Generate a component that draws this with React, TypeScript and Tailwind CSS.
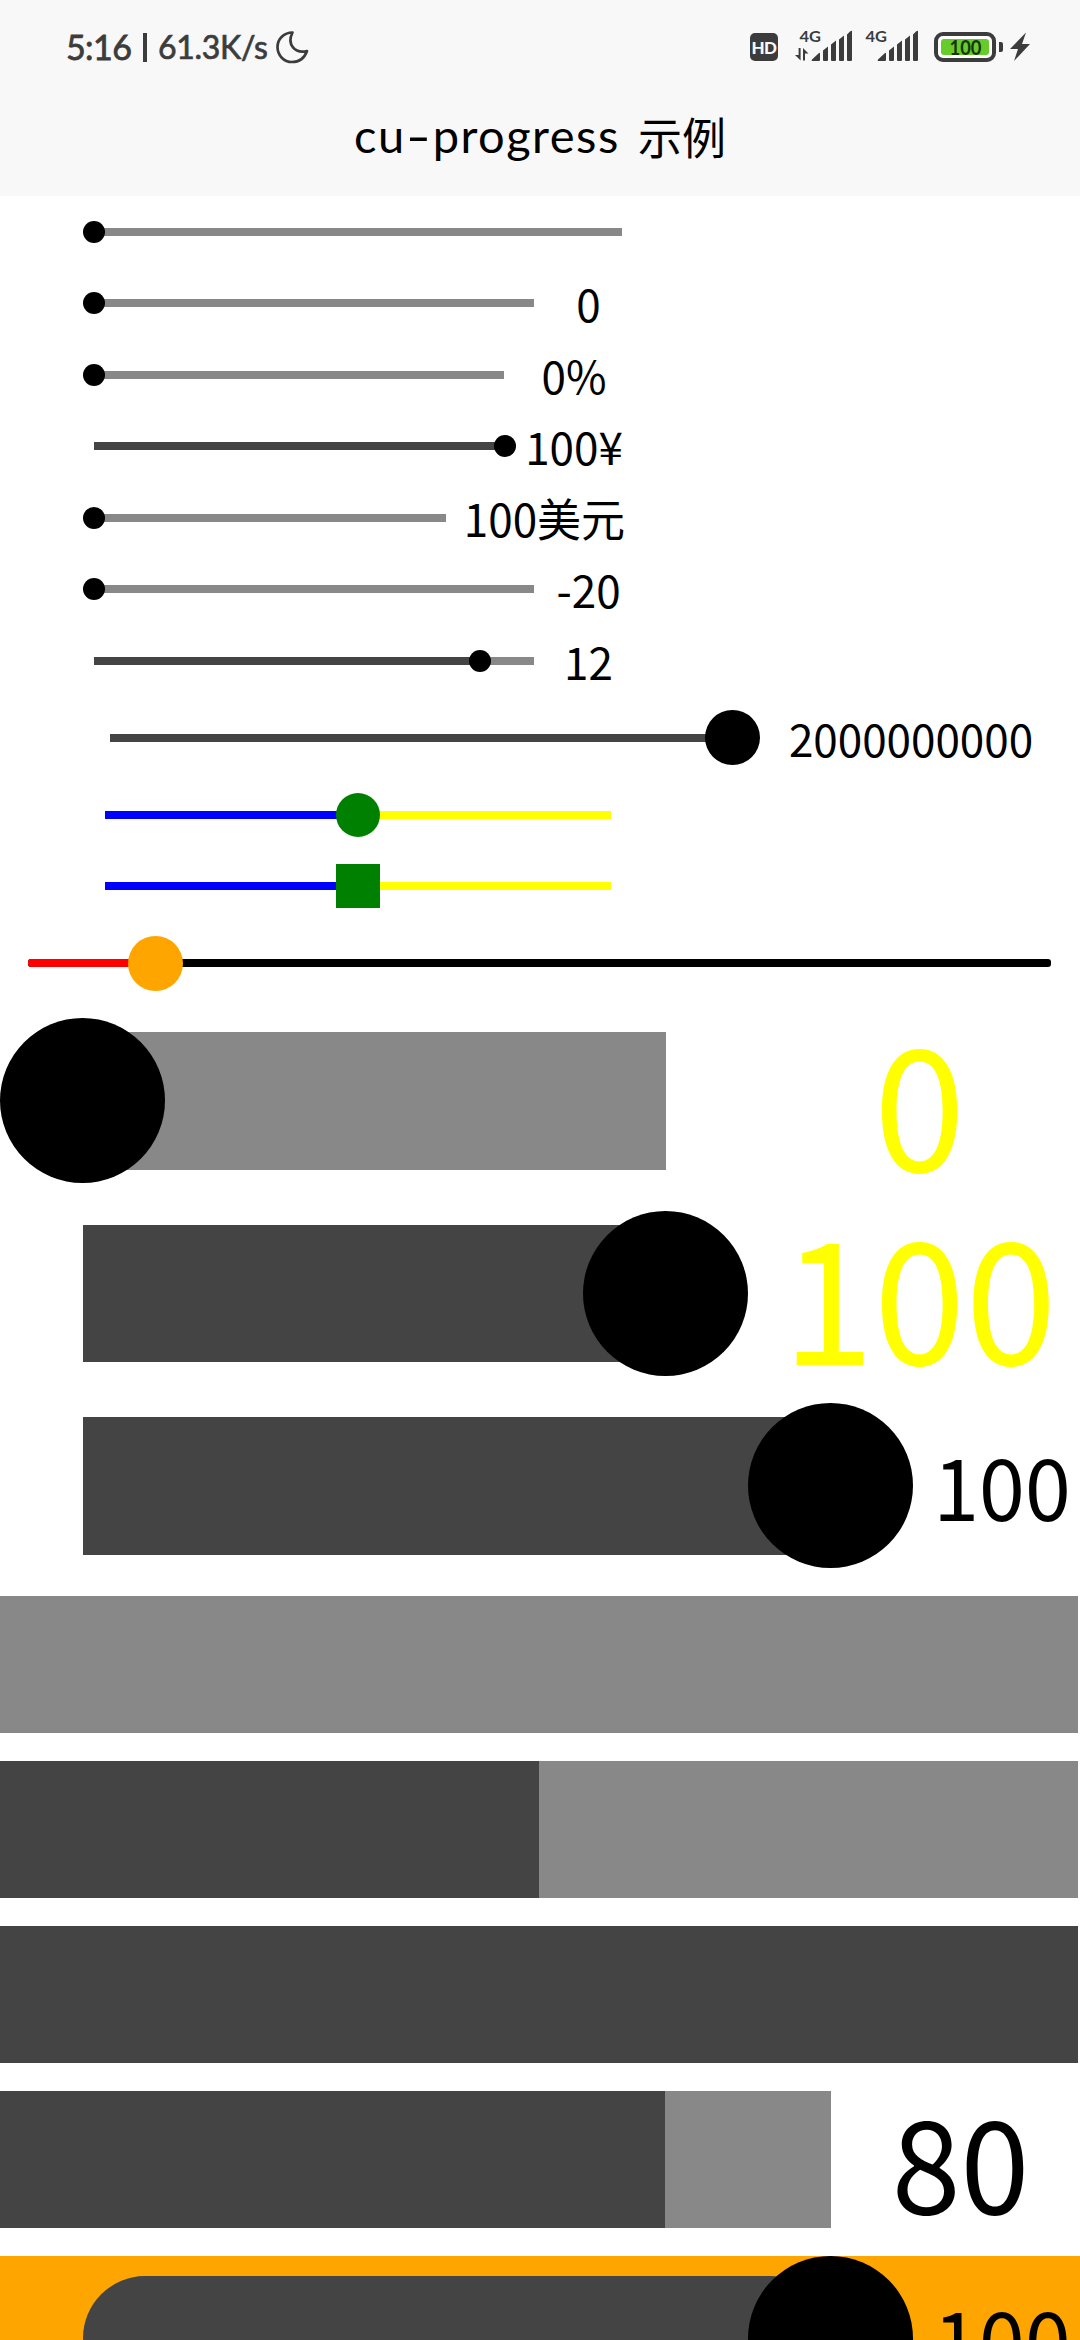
import React from "react";

type RowProps = {
  row: string;
  track: string;
  fill?: string;
  thumb?: string;
  label?: string;
  labelBox?: string;
};

const rows: RowProps[] = [
  { row: "h-11 mt-[14px]", track: "ml-[94px] w-[528px] h-2 bg-[#888]", thumb: "-left-[11px] -top-[7px] size-[22px] rounded-full bg-black" },
  { row: "h-11 mt-[27px]", track: "ml-[94px] w-[440px] h-2 bg-[#888]", thumb: "-left-[11px] -top-[7px] size-[22px] rounded-full bg-black", label: "0", labelBox: "w-[109px] text-[44px] text-black" },
  { row: "h-11 mt-[28px]", track: "ml-[94px] w-[410px] h-2 bg-[#888]", thumb: "-left-[11px] -top-[7px] size-[22px] rounded-full bg-black", label: "0%", labelBox: "w-[140px] text-[44px] text-black" },
  { row: "h-11 mt-[27px]", track: "ml-[94px] w-[410px] h-2 bg-[#888]", fill: "w-full bg-[#444]", thumb: "-right-[12px] -top-[7px] size-[22px] rounded-full bg-black", label: "100¥", labelBox: "w-[140px] text-[44px] text-black" },
  { row: "h-11 mt-[28px]", track: "ml-[94px] w-[352px] h-2 bg-[#888]", thumb: "-left-[11px] -top-[7px] size-[22px] rounded-full bg-black", label: "100美元", labelBox: "w-[197px] text-[44px] text-black" },
  { row: "h-11 mt-[27px]", track: "ml-[94px] w-[440px] h-2 bg-[#888]", thumb: "-left-[11px] -top-[7px] size-[22px] rounded-full bg-black", label: "-20", labelBox: "w-[109px] text-[44px] text-black" },
  { row: "h-11 mt-[28px]", track: "ml-[94px] w-[440px] h-2 bg-[#888]", fill: "w-[386px] bg-[#444]", thumb: "left-[375px] -top-[7px] size-[22px] rounded-full bg-black", label: "12", labelBox: "w-[109px] text-[44px] text-black" },
  { row: "h-[55px] mt-[27px]", track: "ml-[110px] w-[623px] h-2 bg-[#888]", fill: "w-full bg-[#444]", thumb: "left-[595px] -top-[23.5px] size-[55px] rounded-full bg-black", label: "2000000000", labelBox: "w-[356px] text-[44px] text-black" },
  { row: "h-11 mt-[28px]", track: "ml-[105px] w-[506px] h-2 bg-[#ff0]", fill: "w-1/2 bg-[#00f]", thumb: "left-[231px] -top-[18px] size-11 rounded-full bg-[#008000]" },
  { row: "h-11 mt-[27px]", track: "ml-[105px] w-[506px] h-2 bg-[#ff0]", fill: "w-1/2 bg-[#00f]", thumb: "left-[231px] -top-[18px] size-11 bg-[#008000]" },
  { row: "h-[54px] mt-[28px]", track: "ml-[28px] w-[1023px] h-2 rounded-[3px] bg-black", fill: "w-[127px] rounded-l-[3px] bg-[#f00]", thumb: "left-[100px] -top-[23px] size-[55px] rounded-full bg-[#ffa500]" },
  { row: "h-[165px] mt-[28px]", track: "ml-[83px] w-[583px] h-[138px] bg-[#888]", thumb: "-left-[83px] -top-[13.5px] size-[165px] rounded-full bg-black", label: "0", labelBox: "w-[507px] text-[165px] text-[#ff0]" },
  { row: "h-[165px] mt-[28px]", track: "ml-[83px] w-[583px] h-[137px] bg-[#888]", fill: "w-full bg-[#444]", thumb: "left-[500px] -top-[14px] size-[165px] rounded-full bg-black", label: "100", labelBox: "w-[507px] text-[165px] text-[#ff0]" },
  { row: "h-[165px] mt-[27px]", track: "ml-[83px] w-[748px] h-[138px] bg-[#888]", fill: "w-full bg-[#444]", thumb: "left-[665px] -top-[13.5px] size-[165px] rounded-full bg-black", label: "100", labelBox: "w-[342px] text-[82.5px] text-black" },
  { row: "h-[137px] mt-[28px]", track: "w-[1078px] h-[137px] bg-[#888]" },
  { row: "h-[137px] mt-[28px]", track: "w-[1078px] h-[137px] bg-[#888]", fill: "w-1/2 bg-[#444]" },
  { row: "h-[137px] mt-[28px]", track: "w-[1078px] h-[137px] bg-[#888]", fill: "w-full bg-[#444]" },
  { row: "h-[137px] mt-[28px]", track: "w-[831px] h-[137px] bg-[#888]", fill: "w-4/5 bg-[#444]", label: "80", labelBox: "w-[259px] text-[124px] text-black" },
  { row: "h-[165px] mt-[28px] bg-[#ffa500]", track: "ml-[83px] w-[748px] h-[125px] rounded-full bg-[#888]", fill: "w-full rounded-full bg-[#444]", thumb: "left-[665px] -top-[20px] size-[165px] rounded-full bg-black", label: "100", labelBox: "w-[342px] text-[82.5px] text-black" },
];

function ProgressRow({ row, track, fill, thumb, label, labelBox }: RowProps) {
  return (
    <div className={`flex w-full shrink-0 items-center ${row}`}>
      <div className={`relative shrink-0 ${track}`}>
        {fill && <div className={`h-full ${fill}`} />}
        {thumb && <div className={`absolute ${thumb}`} />}
      </div>
      {label && (
        <div className={`flex shrink-0 origin-[50%_94%] scale-y-[1.03] justify-center whitespace-nowrap leading-none ${labelBox}`}>{label}</div>
      )}
    </div>
  );
}

function Signal({ arrows }: { arrows?: boolean }) {
  return (
    <svg className="overflow-visible" width="58" height="34" viewBox="0 0 58 34" fill="#3c3c3c">
      <text x="4.5" y="13.500" fontFamily="Lato" fontSize="16" fontWeight="700" textLength="21.5" lengthAdjust="spacingAndGlyphs">4G</text>
      {arrows && <path d="M3.600 20h2v12.500L0 27h3.600zM8 32.500V20l5.500 5.500H10v7z" />}
      <path d="M17 31.500l7-6.500q1-.6 1 .8V32q0 1-1 1h-6q-2 0-1-1.500zM28 22.500l5-4V32q0 1-1 1h-3q-1 0-1-1zM36 16.500l5-4V32q0 1-1 1h-3q-1 0-1-1zM44 11.500l5-4V32q0 1-1 1h-3q-1 0-1-1zM52 6.500l3-3q2-1.500 2 0V32q0 1-1 1h-3q-1 0-1-1z" />
    </svg>
  );
}

function StatusBar() {
  return (
    <div className="flex h-[94px] items-center pl-[66px] pr-[50px] font-['Lato'] text-[#3c3c3c]">
      <span className="w-[66px] whitespace-nowrap text-[34px] leading-none tracking-[-0.6px] [-webkit-text-stroke:0.8px_#3c3c3c]">5:16</span>
      <span className="ml-[11px] h-[29px] w-[4px] bg-[#3c3c3c]" />
      <span className="ml-[11px] w-[113px] whitespace-nowrap text-[32px] leading-none tracking-[-0.3px] [-webkit-text-stroke:0.7px_#3c3c3c]">61.3K/s</span>
      <svg className="ml-[4px]" width="34" height="34" viewBox="0 0 34 34" fill="none" stroke="#3c3c3c" strokeWidth="2.700" strokeLinejoin="round">
        <path d="M17.500 2.500C9 2.500 2.500 9 2.500 17c0 8.500 6.500 15 14.500 15 7 0 12.500-4 15-11-12 3-20.500-6.500-14.500-18.500z" />
      </svg>
      <div className="flex flex-1 items-center justify-end">
        <span className="flex size-7 items-center justify-center rounded-[5px] bg-[#3c3c3c] text-[17px] font-black leading-none tracking-[-0.5px] text-[#f8f8f8]">HD</span>
        <span className="mb-[5px] ml-[17px] flex"><Signal arrows /></span>
        <span className="mb-[5px] ml-[8px] flex"><Signal /></span>
        <svg className="ml-[15px]" width="96" height="34" viewBox="0 0 96 34">
          <rect x="2" y="4" width="58" height="26" rx="7" fill="#fff" stroke="#3c3c3c" strokeWidth="4" />
          <rect x="7" y="9" width="48" height="16" rx="3" fill="#66cb2b" />
          <text x="15.500" y="24.500" fontFamily="Lato" fontSize="21" fontWeight="700" fill="#17360a" textLength="32" lengthAdjust="spacingAndGlyphs">100</text>
          <path d="M65 12h2q2 0 2 2v6q0 2-2 2h-2z" fill="#3c3c3c" />
          <path d="M92 2.500L76 19h8l-4 12 16-17h-8z" fill="#3c3c3c" />
        </svg>
      </div>
    </div>
  );
}

export default function App() {
  return (
    <div className="flex h-[2340px] w-[1080px] flex-col overflow-hidden bg-white font-['Noto_Sans_CJK_SC',sans-serif]">
      <header className="h-[196px] shrink-0 bg-[#f8f8f8]">
        <StatusBar />
        <h1 className="flex h-[83px] items-center justify-center whitespace-nowrap text-[47px] leading-none text-black">
          <span className="w-[284px] font-['Lato'] tracking-[1.5px]">
            cu<span className="mx-[4px] inline-block scale-x-[1.45]">-</span>progress
          </span>
          <span className="text-[44px]">示例</span>
        </h1>
      </header>
      <main className="flex flex-1 flex-col">
        {rows.map((item, index) => (
          <ProgressRow key={index} {...item} />
        ))}
      </main>
    </div>
  );
}
